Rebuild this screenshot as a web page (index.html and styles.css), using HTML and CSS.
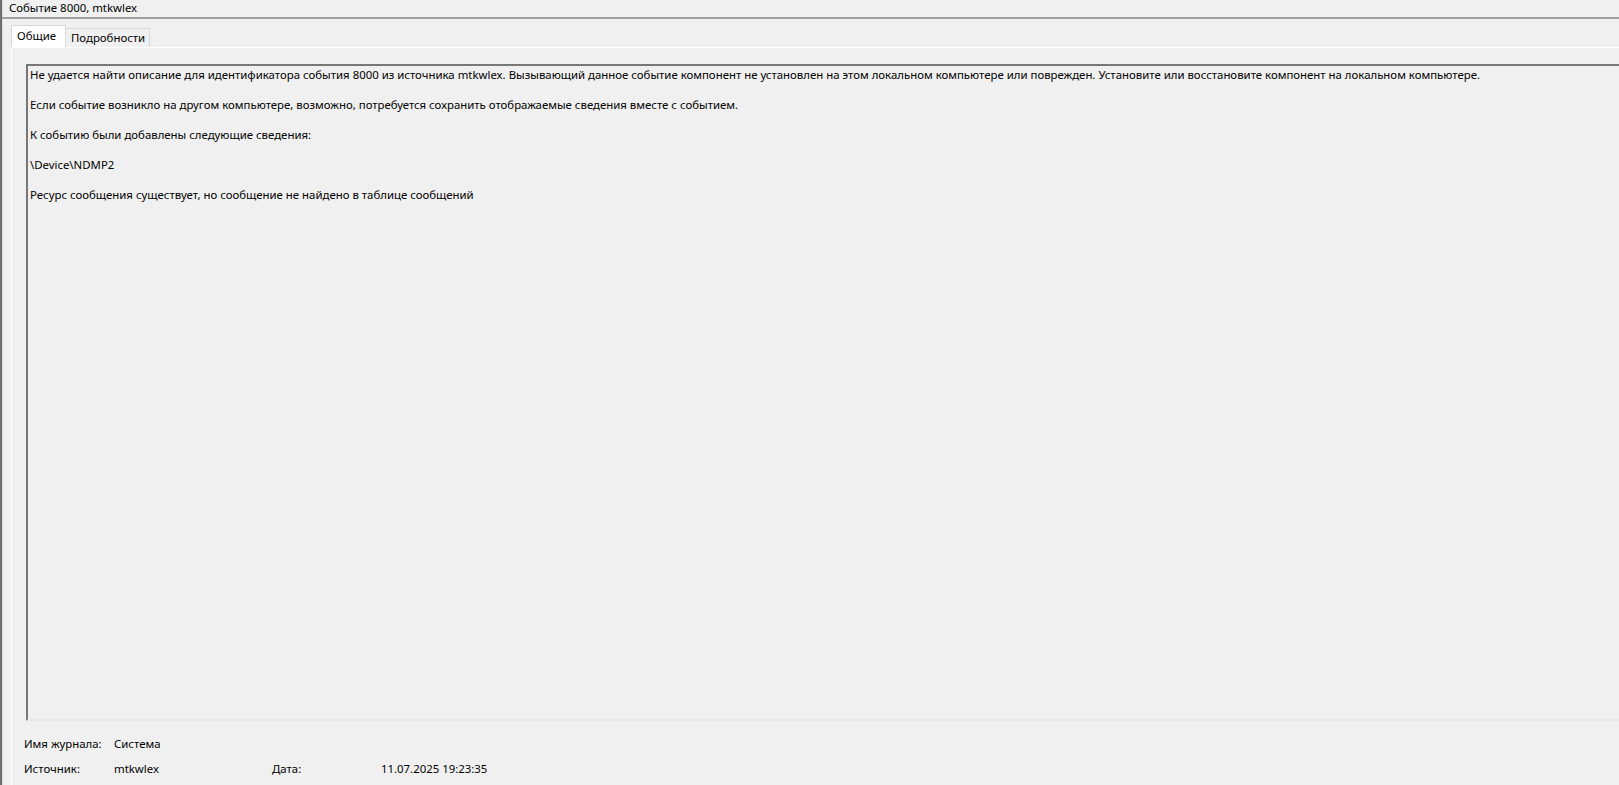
FILE: index.html
```html
<!DOCTYPE html>
<html lang="ru">
<head>
<meta charset="utf-8">
<title>Событие 8000, mtkwlex</title>
<link rel="stylesheet" href="styles.css">
</head>
<body>
<div class="frame">
  <div class="title">Событие 8000, mtkwlex</div>
  <div class="content">
    <div class="tabs">
      <div class="tab active">Общие</div>
      <div class="tab">Подробности</div>
    </div>
    <div class="page">
      <div class="textbox">
        <p>Не удается найти описание для идентификатора события 8000 из источника mtkwlex. Вызывающий данное событие компонент не установлен на этом локальном компьютере или поврежден. Установите или восстановите компонент на локальном компьютере.</p>
        <p>Если событие возникло на другом компьютере, возможно, потребуется сохранить отображаемые сведения вместе с событием.</p>
        <p>К событию были добавлены следующие сведения:</p>
        <p>\Device\NDMP2</p>
        <p>Ресурс сообщения существует, но сообщение не найдено в таблице сообщений</p>
      </div>
      <div class="info">
        <span class="lbl">Имя журнала:</span><span class="val">Система</span><span></span><span></span>
        <span class="lbl">Источник:</span><span class="val">mtkwlex</span><span class="lbl">Дата:</span><span class="val">11.07.2025 19:23:35</span>
      </div>
    </div>
  </div>
</div>
</body>
</html>
```
FILE: styles.css
```css
html, body {
  margin: 0;
  padding: 0;
  height: 100%;
  overflow: hidden;
}
body {
  background: #f0f0f0;
  font-family: "Noto Sans", "Open Sans", sans-serif;
  font-size: 11.4px;
  color: #000;
}
.frame {
  height: 785px;
  display: flex;
  flex-direction: column;
  border-left: 2px solid #6e6e6e;
  box-shadow: inset 1px 0 #dcdcdc;
  box-sizing: border-box;
}
.title {
  height: 17px;
  line-height: 16px;
  padding-left: 7px;
  border-bottom: 2px solid #a0a0a0;
  white-space: nowrap;
}
.content {
  flex: 1;
  display: flex;
  flex-direction: column;
  padding-left: 9px;
}
.tabs {
  display: flex;
  align-items: flex-end;
  margin-top: 6px;
  height: 22px;
}
.tab {
  box-sizing: border-box;
  height: 19px;
  line-height: 17px;
  padding: 0 4px 0 5px;
  border: 1px solid #d9d9d9;
  border-bottom: none;
  border-left: none;
  background: #f0f0f0;
  white-space: nowrap;
}
.tab.active {
  height: 22px;
  line-height: 20px;
  width: 55px;
  padding: 0 5px;
  background: #fff;
  border-left: 1px solid #d9d9d9;
}
.page {
  flex: 1;
  border-top: 1px solid #fff;
  border-left: 1px solid #fff;
  padding: 16px 0 0 14px;
  display: flex;
  flex-direction: column;
}
.textbox {
  box-sizing: border-box;
  height: 657px;
  margin-right: -20px;
  border-top: 2px solid #777;
  border-left: 2px solid #777;
  border-bottom: 2px solid #e8e8e8;
  border-right: 2px solid #e8e8e8;
  padding: 1px 2px;
  line-height: 15px;
}
.textbox p {
  margin: 0 0 15px;
  white-space: nowrap;
}
.info {
  display: grid;
  grid-template-columns: 90px 158px 109px auto;
  row-gap: 9px;
  margin-top: 15px;
  padding-left: 12px;
  line-height: 16px;
  margin-left: -14px;
}
```
